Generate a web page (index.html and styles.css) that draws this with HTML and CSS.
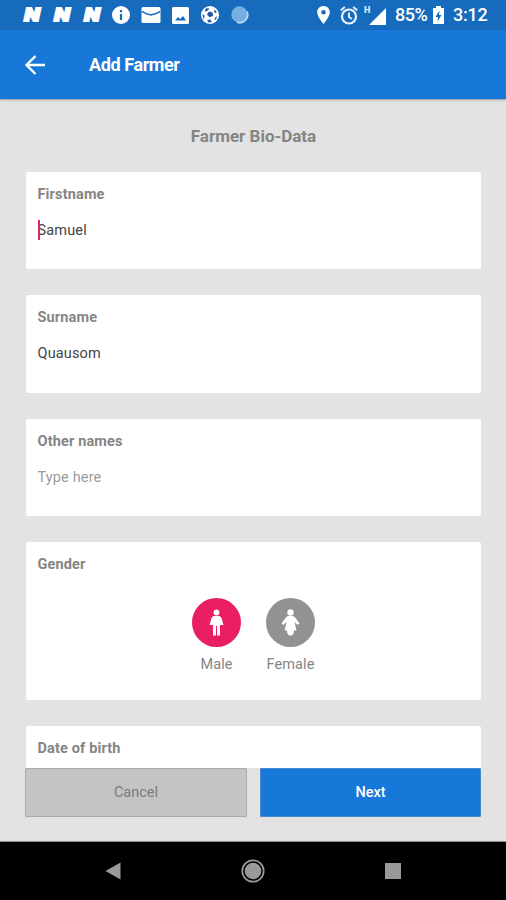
FILE: index.html
```html
<!DOCTYPE html>
<html lang="en">
<head>
<meta charset="utf-8">
<title>Add Farmer</title>
<link rel="stylesheet" href="styles.css">
</head>
<body>
<div class="screen">
  <div class="status">
    <div class="notifications">
      <span class="n">N</span><span class="n">N</span><span class="n">N</span>
      <svg class="info" width="18" height="18" viewBox="0 0 18 18"><circle cx="9" cy="9" r="9" fill="#fff"/><path d="M9 4v2.2M9 8v6" stroke="#176bbd" stroke-width="2.2"/></svg>
      <svg class="mail" width="20" height="16" viewBox="0 0 20 16"><rect x=".5" width="19" height="16" rx="1.5" fill="#fff"/><path d="M1 4.500l4.500 2.300L10 8l4.500-1.200L19 4.500" fill="none" stroke="#176bbd" stroke-width="1.5"/></svg>
      <svg class="photo" width="17" height="17" viewBox="0 0 17 17"><rect width="17" height="17" rx="1.5" fill="#fff"/><path d="M3 13.500l3-3.500 2 2L11 9l3 4.500z" fill="#176bbd"/></svg>
      <svg class="ball" width="18" height="18" viewBox="0 0 18 18"><circle cx="9" cy="9" r="9" fill="#fff"/><path d="M8 5.500l3.700 1 .3 3.500-3.500 1.300L6 8.600zM5 2.300l3.500.2-2 2.300-3 .8zM1.500 8.300l1.700.7.300 3-1.200.8zM6 14l3.500-.5 1.300 2.200-3 1zM14.200 11.500l2-1.200-1.200 3.300-1.700.4zM13.500 3.400l2 2.200-.5 1.700-1.800-1.300z" fill="#24569f"/></svg>
      <svg class="sync" width="18" height="18" viewBox="0 0 18 18"><circle cx="8.500" cy="8.500" r="8.200" fill="#75aee0"/><path d="M16 5.500A8 8 0 0 1 6 16.200" fill="none" stroke="#b5d6f2" stroke-width="1.800"/></svg>
    </div>
    <div class="system">
      <svg class="pin" width="13" height="18" viewBox="0 0 13 18"><path fill-rule="evenodd" d="M6.500 0C3 0 .2 2.800 .2 6.300C.2 11 6.500 18 6.500 18S12.800 11 12.800 6.300C12.800 2.800 10 0 6.500 0zM6.500 4a2.300 2.300 0 1 1 0 4.600a2.300 2.300 0 1 1 0-4.600z" fill="#fff"/></svg>
      <svg class="alarm" width="18" height="19" viewBox="0 0 18 19" fill="none" stroke="#e8f3ff"><circle cx="9" cy="10.500" r="7" stroke-width="2.200"/><path d="M9 6.500v4.500l3 2M.8 4.300l4-3.300M17.200 4.300l-4-3.300" stroke-width="1.900"/></svg>
      <div class="signal"><span class="network">H</span><svg width="17" height="17" viewBox="0 0 17 17"><path d="M17 0v17H0z" fill="#fff"/></svg></div>
      <span class="percent">85%</span>
      <svg class="battery" width="11" height="18" viewBox="0 0 11 18"><path d="M3 0h5v2h3v16H0V2h3z" fill="#fff"/><path d="M6.500 4.500L2.500 11h2.500l-.5 4.500L8.500 9H6z" fill="#176bbd"/></svg>
      <span class="clock">3:12</span>
    </div>
  </div>
  <header class="appbar">
    <svg class="back" width="20" height="20" viewBox="0 0 20 20"><path d="M20 10H2M10.500 1L1.500 10l9 9" fill="none" stroke="#fff" stroke-width="2.300"/></svg>
    <h1>Add Farmer</h1>
  </header>
  <main class="content">
    <h2>Farmer Bio-Data</h2>
    <section class="card field"><h3>Firstname</h3><p class="value focused">Samuel</p></section>
    <section class="card field"><h3>Surname</h3><p class="value">Quausom</p></section>
    <section class="card field"><h3>Other names</h3><p class="value hint">Type here</p></section>
    <section class="card gender">
      <h3>Gender</h3>
      <div class="options">
        <div class="option selected">
          <svg width="49" height="49" viewBox="0 0 49 49"><circle cx="24.500" cy="24.500" r="24.500" class="disc"/><g fill="#fff"><circle cx="24.500" cy="14.500" r="2.900"/><path d="M21.500 18h6l1.800 1.500 2.200 7.500h-3.500v10.500H25V28h-1v9.500h-3V27h-3.500l2.200-7.500z"/></g></svg>
          <span>Male</span>
        </div>
        <div class="option">
          <svg width="49" height="49" viewBox="0 0 49 49"><circle cx="24.500" cy="24.500" r="24.500" class="disc"/><g fill="#fff"><circle cx="24.500" cy="14.500" r="3.200"/><path d="M21.800 18h5.400l2 1.500 4.300 6-1.800 1.400-3.200-3 2 8.600h-2.500l-.4 3-1.900 2h-2.400l-1.900-2-.4-3h-2.500l2-8.600-3.200 3-1.800-1.400 4.300-6z"/></g></svg>
          <span>Female</span>
        </div>
      </div>
    </section>
    <section class="card birth"><h3>Date of birth</h3></section>
  </main>
  <footer class="actions">
    <button class="cancel">Cancel</button>
    <button class="next">Next</button>
  </footer>
  <nav class="navbar">
    <svg width="16" height="18" viewBox="0 0 16 18"><path d="M.5 9L15.500.500v17z" fill="#999"/></svg>
    <svg width="24" height="24" viewBox="0 0 24 24"><circle cx="12" cy="12" r="10.700" fill="none" stroke="#999" stroke-width="1.700"/><circle cx="12" cy="12" r="8.300" fill="#999"/></svg>
    <svg width="16" height="16" viewBox="0 0 16 16"><path d="M0 0h16v16H0z" fill="#999"/></svg>
  </nav>
</div>
</body>
</html>
```
FILE: styles.css
```css
* { box-sizing: border-box; }
body, h1, h2, h3, p { margin: 0; }
body { font-family: Roboto, "Liberation Sans", sans-serif; background: #e3e3e3; }
svg { display: block; flex: none; }
.screen { width: 506px; height: 900px; display: flex; flex-direction: column; overflow: hidden; }
.status { height: 30px; flex: none; background: #176bbd; color: #fff; display: flex; justify-content: space-between; align-items: center; padding: 0 18px 0 21px; }
.notifications, .system { display: flex; align-items: center; }
.n { width: 22px; margin-right: 8px; font-size: 19px; line-height: 20px; font-weight: 900; font-style: italic; text-align: center; -webkit-text-stroke: 2px #fff; transform: scaleX(1.2); }
.info { margin-left: 1px; }
.mail { margin-left: 11px; }
.photo { margin-left: 11px; }
.ball { margin-left: 12px; }
.sync { margin-left: 12px; }
.alarm { margin-left: 10px; }
.signal { position: relative; margin: 2px 0 0 11px; }
.network { position: absolute; left: -5px; top: -2px; font-size: 9px; line-height: 9px; font-weight: 900; color: #d7e9fa; }
.percent { margin-left: 9px; width: 32px; font-size: 18px; line-height: 20px; font-weight: 500; letter-spacing: -0.5px; white-space: nowrap; }
.battery { margin-left: 6px; }
.clock { margin-left: 9px; width: 35px; font-size: 18px; line-height: 20px; font-weight: 500; letter-spacing: -0.2px; white-space: nowrap; }
.appbar { height: 69px; flex: none; background: #1878d9; color: #fff; display: flex; align-items: center; padding: 0 25px; box-shadow: 0 1px 2px rgba(0, 0, 0, .35); z-index: 1; }
.appbar h1 { margin-left: 44px; font-size: 18px; line-height: 22px; font-weight: 700; letter-spacing: -0.4px; }
.content { flex: 1; min-height: 0; overflow: hidden; padding: 27px 25px 0 26px; display: flex; flex-direction: column; }
h2 { flex: none; height: 20px; margin-bottom: 26px; text-align: center; font-size: 17px; line-height: 20px; font-weight: 700; color: #858585; }
.card { flex: none; background: #fff; border-radius: 2px; padding: 14px 11.500px 0; margin-bottom: 26px; }
h3 { font-size: 14.500px; line-height: 18px; font-weight: 700; color: #858585; letter-spacing: .15px; }
.field { height: 97.300px; }
.value { width: max-content; margin-top: 17px; font-size: 14.500px; line-height: 20px; color: #444; letter-spacing: .15px; }
.focused { position: relative; }
.focused::before { content: ""; position: absolute; left: 0; top: -1px; width: 2px; height: 20px; background: #e91e63; }
.hint { color: #9b9b9b; }
.gender { height: 158px; }
.options { display: flex; justify-content: center; gap: 25px; margin-top: 24px; }
.option { width: 49px; display: flex; flex-direction: column; align-items: center; color: #858585; font-size: 14.500px; line-height: 18px; gap: 9px; letter-spacing: .1px; }
.disc { fill: #929292; }
.selected .disc { fill: #e91e63; }
.birth { height: 80px; }
.actions { height: 74px; flex: none; display: grid; grid-template-columns: 222px 221px; column-gap: 13px; padding: 0 25px; align-items: start; border-bottom: 1px solid #8c8c8c; background: #e3e3e3; }
button { height: 49px; padding: 0; font-family: inherit; font-size: 14.500px; border-radius: 1px; }
.cancel { background: #c4c4c4; color: #7b7b7b; border: 1px solid #aaa; }
.next { background: #1878d9; color: #fff; font-weight: 500; border: 1px solid #478acb; }
.navbar { height: 58px; flex: none; background: #000; display: flex; align-items: center; justify-content: space-between; padding: 0 105px; }
```
